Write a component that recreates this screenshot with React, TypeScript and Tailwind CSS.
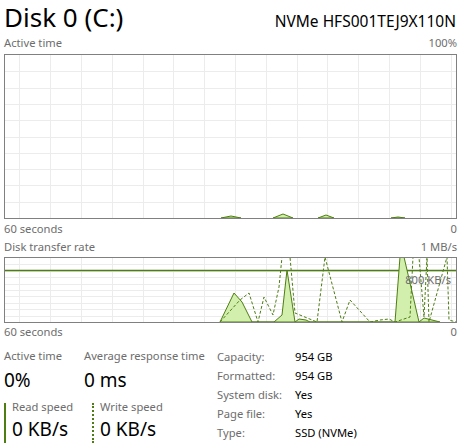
import React from 'react'

const GREEN = '#4e7d12'
const FILL = '#d3efad'

// activity samples, in graph pixels (inner box)
const ACTIVE_BUMPS = [
  [216, 163, 226, 161, 236, 163],
  [268, 163, 278, 159, 288, 163],
  [313, 163, 321, 160, 329, 163],
  [386, 163, 393, 162, 400, 163],
]

const READ = [
  [215, 64], [229, 35], [237, 44], [247, 64], [269, 64], [277, 57], [282, 12], [290, 64],
  [294, 61], [301, 62], [305, 64], [390, 64], [395, -1], [399, -1], [414, 64], [419, 60], [435, 64],
]

const WRITE = [
  [215, 64], [235, 42], [244, 35], [253, 64], [259, 39], [268, 57], [274, 29], [277, -1],
  [285, -1], [290, 55], [312, 64], [320, -1], [337, 64], [345, 42], [365, 64], [375, 62],
  [384, 61], [390, 64], [405, 59], [408, -1], [414, -1], [419, 59], [422, -1], [424, 64],
  [442, -1], [444, 62], [451, 64],
]

function Grid({ w, h, rows }: { w: number; h: number; rows: number }) {
  const vx: number[] = []
  for (let x = 14.3; x < w; x += 30.8) vx.push(Math.round(x) + 0.5)
  const hy: number[] = []
  for (let i = 1; i < rows; i++) hy.push(Math.round((h / rows) * i) + 0.5)
  return (
    <g stroke="#ececec" strokeWidth="1">
      {vx.map((x) => (
        <line key={'v' + x} x1={x} y1={0} x2={x} y2={h} />
      ))}
      {hy.map((y) => (
        <line key={'h' + y} x1={0} y1={y} x2={w} y2={y} />
      ))}
    </g>
  )
}

function toPts(p: number[][]) {
  return p.map(([x, y]) => `${x},${y}`).join(' ')
}

function Label({ left, right }: { left: string; right: string }) {
  return (
    <div className="flex justify-between h-[16px] text-[11.2px] leading-[16px] text-[#6d6d6d]">
      <span>{left}</span>
      <span>{right}</span>
    </div>
  )
}

export default function App() {
  return (
    <div className="w-[467px] h-[448px] overflow-hidden bg-white pl-[4px] pr-[10px] font-['Segoe_UI','Noto_Sans',sans-serif] text-black">
      {/* Header */}
      <div className="flex justify-between items-baseline h-[35px] pr-[1px]">
        <span className="text-[26px] leading-[32px] mt-[1px]">Disk 0 (C:)</span>
        <span className="text-[15.5px] leading-[20px]">NVMe HFS001TEJ9X110N</span>
      </div>

      <Label left="Active time" right="100%" />
      <div className="mt-[3px] w-[453px] h-[165px] border border-[#808080]">
        <svg width="451" height="163" className="block">
          <Grid w={451} h={163} rows={10} />
          {ACTIVE_BUMPS.map((b, i) => (
            <polygon
              key={i}
              points={`${b[0]},${b[1]} ${b[2]},${b[3]} ${b[4]},${b[5]}`}
              fill={FILL}
              stroke={GREEN}
              strokeWidth="1"
            />
          ))}
        </svg>
      </div>
      <div className="mt-[2px]">
        <Label left="60 seconds" right="0" />
      </div>

      <div className="mt-[2px]">
        <Label left="Disk transfer rate" right="1 MB/s" />
      </div>
      <div className="relative mt-[2px] w-[453px] h-[66px] border border-[#808080]">
        <svg width="451" height="64" className="block overflow-hidden">
          <Grid w={451} h={64} rows={10} />
          <line x1="0" y1="12.5" x2="451" y2="12.5" stroke={GREEN} strokeWidth="1.5" />
          <polygon points={toPts(READ)} fill={FILL} stroke={GREEN} strokeWidth="1" />
          <polyline points={toPts(WRITE)} fill="none" stroke={GREEN} strokeWidth="1" strokeDasharray="3 2" />
        </svg>
        <span className="absolute right-[5px] top-[14px] text-[11.2px] leading-[16px] text-[#6d6d6d]">800 KB/s</span>
      </div>
      <div className="mt-[1px]">
        <Label left="60 seconds" right="0" />
      </div>

      {/* Stats */}
      <div className="flex">
        <div className="w-[212px] pt-[8px]">
          <div className="flex">
            <div className="w-[80px]">
              <div className="text-[11.2px] leading-[16px] text-[#6d6d6d]">Active time</div>
              <div className="mt-[4px] text-[19px] leading-[24px]">0%</div>
            </div>
            <div>
              <div className="text-[11.2px] leading-[16px] text-[#6d6d6d]">Average response time</div>
              <div className="mt-[4px] text-[19px] leading-[24px]">0 ms</div>
            </div>
          </div>
          <div className="flex mt-[7px]">
            <div className="flex w-[88px]">
              <div className="w-[2px] h-[40px] mt-[4px] bg-[#4e7d12]" />
              <div className="pl-[6px]">
                <div className="text-[11.2px] leading-[16px] text-[#6d6d6d]">Read speed</div>
                <div className="text-[19px] leading-[28px]">0 KB/s</div>
              </div>
            </div>
            <div className="flex">
              <div className="h-[40px] mt-[4px] border-l-2 border-dotted border-[#4e7d12]" />
              <div className="pl-[6px]">
                <div className="text-[11.2px] leading-[16px] text-[#6d6d6d]">Write speed</div>
                <div className="text-[19px] leading-[28px]">0 KB/s</div>
              </div>
            </div>
          </div>
        </div>
        <div className="pt-[8px] pl-[1px] grid grid-cols-[78px_auto] text-[11.2px] leading-[18px]">
          <span className="text-[#6d6d6d]">Capacity:</span>
          <span>954 GB</span>
          <span className="text-[#6d6d6d]">Formatted:</span>
          <span>954 GB</span>
          <span className="text-[#6d6d6d]">System disk:</span>
          <span>Yes</span>
          <span className="text-[#6d6d6d]">Page file:</span>
          <span>Yes</span>
          <span className="text-[#6d6d6d]">Type:</span>
          <span>SSD (NVMe)</span>
        </div>
      </div>
    </div>
  )
}
